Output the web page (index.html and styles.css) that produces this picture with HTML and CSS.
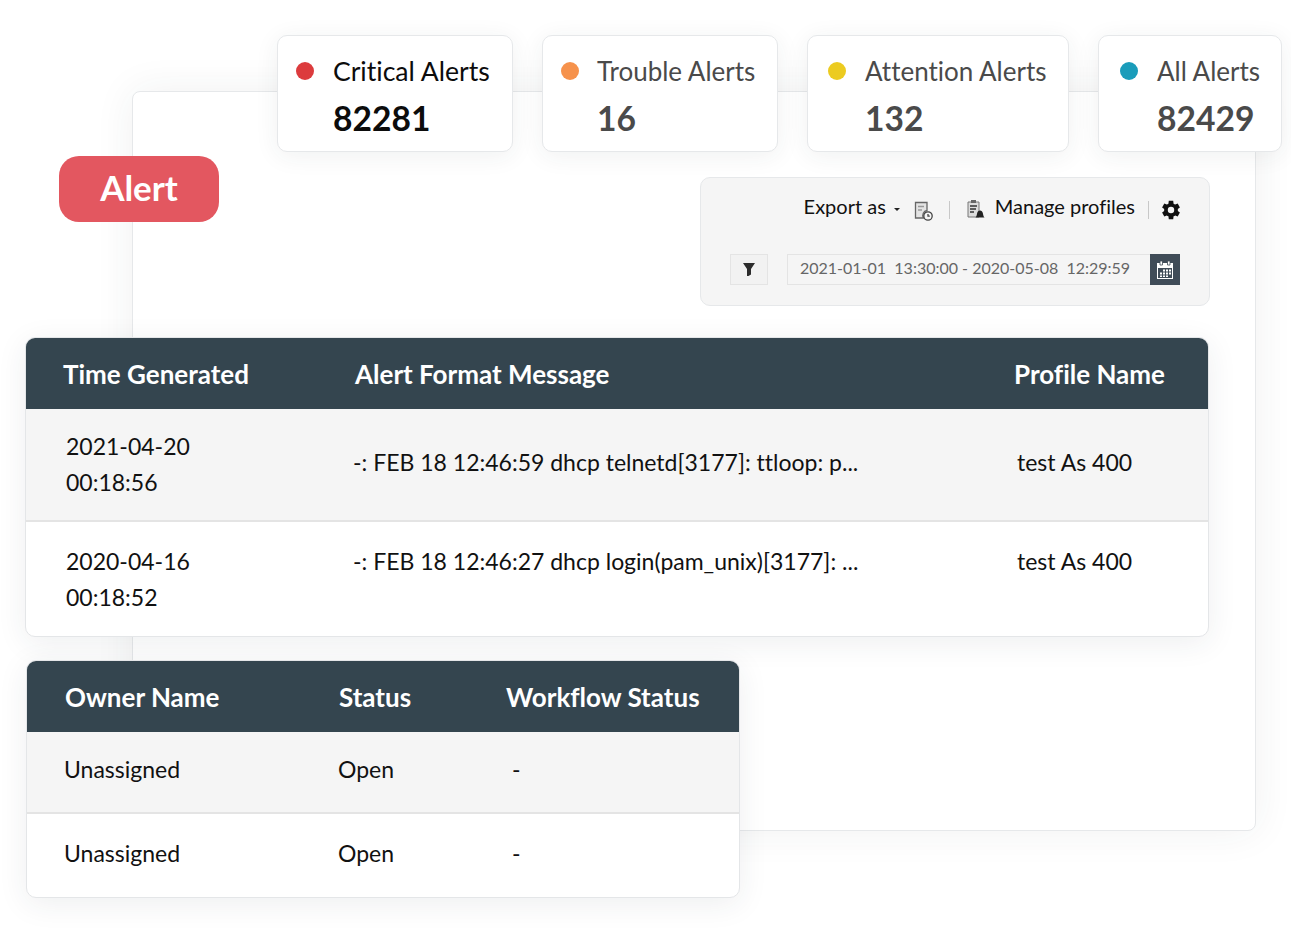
FILE: index.html
```html
<!DOCTYPE html>
<html lang="en">
<head>
    <meta charset="UTF-8">
    <title>Alert</title>
    <link rel="stylesheet" href="styles.css">
</head>
<body>

<div class="stage">
    <div class="backdrop"></div>

    <div class="stats">
        <div class="stat stat-critical">
            <span class="dot dot-red"></span>
            <div>
                <div class="stat-label">Critical Alerts</div>
                <div class="stat-value">82281</div>
            </div>
        </div>
        <div class="stat stat-trouble">
            <span class="dot dot-orange"></span>
            <div>
                <div class="stat-label">Trouble Alerts</div>
                <div class="stat-value">16</div>
            </div>
        </div>
        <div class="stat stat-attention">
            <span class="dot dot-yellow"></span>
            <div>
                <div class="stat-label">Attention Alerts</div>
                <div class="stat-value">132</div>
            </div>
        </div>
        <div class="stat stat-all">
            <span class="dot dot-blue"></span>
            <div>
                <div class="stat-label">All Alerts</div>
                <div class="stat-value">82429</div>
            </div>
        </div>
    </div>

    <div class="top-row">
        <div class="alert-badge">Alert</div>
        <div class="toolbar">
            <div class="toolbar-actions">
                <span class="toolbar-text">Export as</span>
                <span class="caret"></span>
                <svg class="icon icon-export" width="19" height="20" viewBox="0 0 19 20" fill="none" stroke="#444" stroke-width="1.300">
                    <path d="M1.500 1.500H13V9.500A5 5 0 0 0 9.500 17H1.500z" fill="#e4e4e4" stroke="#666"/>
                    <path d="M4 5.500h6M4 9h4" stroke="#999"/>
                    <circle cx="14" cy="15" r="4.200" fill="#f5f5f5"/>
                    <path d="M14 13v2.200h1.800"/>
                </svg>
                <span class="sep"></span>
                <svg class="icon icon-profiles" width="18" height="20" viewBox="0 0 18 20">
                    <path d="M1 3h11v15H1z" fill="#dcdcdc" stroke="#777"/>
                    <path d="M4 1h5v3H4z" fill="#666"/>
                    <path d="M3 7h7M3 10h6M3 13h4" stroke="#333" stroke-width="1.300"/>
                    <path d="M8.500 18.500c1-1 1.200-2.500 1.700-4.500.4-1.500 1.200-2.500 2.800-2.500s2.400 1 2.800 2.500c.5 2 .7 3.500 1.700 4.500z" fill="#222"/>
                </svg>
                <span class="toolbar-text manage">Manage profiles</span>
                <span class="sep sep-last"></span>
                <svg class="icon icon-gear" width="22" height="22" viewBox="0 0 24 24" fill="#111">
                    <path d="M19.400 13c.1-.3.100-.7.100-1s0-.7-.1-1l2.300-1.800-2.400-4.200-2.700 1.100c-.5-.4-1.100-.8-1.800-1L14.400 2H9.600l-.4 3.100c-.7.200-1.300.6-1.800 1L4.700 5 2.300 9.200 4.600 11c-.1.300-.1.700-.1 1s0 .7.100 1l-2.300 1.800L4.700 19l2.700-1.100c.5.400 1.100.8 1.800 1l.4 3.100h4.800l.4-3.100c.7-.2 1.300-.6 1.800-1l2.700 1.100 2.400-4.200zM12 15.500a3.500 3.500 0 1 1 0-7 3.500 3.500 0 0 1 0 7z"/>
                </svg>
            </div>
            <div class="toolbar-filters">
                <div class="filter-btn">
                    <svg width="12" height="13" viewBox="0 0 12 13" fill="#2c2c2c"><path d="M0 0h12L8 6v5.500L5.500 13H4V6z"/></svg>
                </div>
                <div class="date-range">2021-01-01&nbsp; 13:30:00 - 2020-05-08&nbsp; 12:29:59</div>
                <div class="date-btn">
                    <svg width="18" height="20" viewBox="0 0 18 20" fill="#fff">
                        <path d="M1 3h16v16H1zM2 8v10h14V8z" fill-rule="evenodd"/>
                        <path d="M4 1h2.500v4H4zM11.500 1H14v4h-2.500z" stroke="#404c58" stroke-width=".8"/>
                        <path d="M7 9.500h2v2H7zM10 9.500h2v2h-2zM13 9.500h2v2h-2zM4 12.500h2v2H4zM7 12.500h2v2H7zM10 12.500h2v2h-2zM13 12.500h2v2h-2zM4 15.500h2v1.500H4zM7 15.500h2v1.500H7zM10 15.500h2v1.500h-2z"/>
                    </svg>
                </div>
            </div>
        </div>
    </div>

    <div class="card card-main">
        <div class="main-row main-head">
            <div>Time Generated</div>
            <div>Alert Format Message</div>
            <div>Profile Name</div>
        </div>
        <div class="main-row main-body row-grey">
            <div>2021-04-20<br>00:18:56</div>
            <div class="cell-up">-: FEB 18 12:46:59 dhcp telnetd[3177]: ttloop: p...</div>
            <div class="cell-up">test As 400</div>
        </div>
        <div class="main-row main-body row-last">
            <div>2020-04-16<br>00:18:52</div>
            <div>-: FEB 18 12:46:27 dhcp login(pam_unix)[3177]: ...</div>
            <div>test As 400</div>
        </div>
    </div>

    <div class="card card-owner">
        <div class="owner-row owner-head">
            <div>Owner Name</div>
            <div>Status</div>
            <div>Workflow Status</div>
        </div>
        <div class="owner-row owner-body row-grey">
            <div>Unassigned</div>
            <div>Open</div>
            <div>-</div>
        </div>
        <div class="owner-row owner-body owner-last">
            <div>Unassigned</div>
            <div>Open</div>
            <div>-</div>
        </div>
    </div>
</div>

</body>
</html>
```

FILE: styles.css
```css
body {
    margin: 0;
    background-color: #ffffff;
    font-family: 'Lato', 'Liberation Sans', sans-serif;
    font-variant-ligatures: none;
    color: #111111;
}
.stage {
    position: relative;
    width: 1291px;
    height: 933px;
    padding-top: 35px;
    box-sizing: border-box;
    overflow: hidden;
}
.backdrop {
    position: absolute;
    left: 132px;
    top: 91px;
    width: 1124px;
    height: 740px;
    box-sizing: border-box;
    background-color: #ffffff;
    border: 1px solid #e6e8ea;
    border-radius: 8px;
    box-shadow: 0 0 40px rgba(40, 50, 60, 0.07);
}
.stats {
    position: relative;
    display: flex;
    gap: 29px;
    margin-left: 277px;
}
.stat {
    display: flex;
    height: 117px;
    box-sizing: border-box;
    padding: 19px 0 0 18px;
    background-color: #ffffff;
    border: 1px solid #e6e8ea;
    border-radius: 10px;
    box-shadow: 0 4px 24px rgba(40, 50, 60, 0.07);
    color: #4a4a4a;
}
.stat-critical { width: 236px; color: #0c0c0c; }
.stat-trouble { width: 236px; }
.stat-attention { width: 262px; padding-left: 20px; }
.stat-all { width: 184px; padding-left: 21px; }
.dot {
    flex: none;
    width: 18px;
    height: 18px;
    margin: 7px 19px 0 0;
    border-radius: 50%;
}
.stat-trouble .dot { margin-right: 18px; }
.dot-red { background-color: #dc3b3d; }
.dot-orange { background-color: #f6924c; }
.dot-yellow { background-color: #eccb20; }
.dot-blue { background-color: #1a9cba; }
.stat-label {
    font-size: 26px;
    line-height: 32px;
    white-space: nowrap;
}
.stat-critical .stat-label { font-size: 26.600px; }
.stat-value {
    margin-top: 11px;
    font-size: 33.600px;
    line-height: 40px;
    font-weight: 700;
}
.top-row {
    position: relative;
    display: flex;
    justify-content: space-between;
    align-items: flex-start;
    width: 1151px;
    margin: 4px 0 0 59px;
}
.alert-badge {
    width: 160px;
    height: 66px;
    background-color: #e35760;
    border-radius: 20px;
    color: #ffffff;
    font-size: 35px;
    font-weight: 700;
    line-height: 62px;
    text-align: center;
}
.toolbar {
    width: 510px;
    height: 129px;
    margin-top: 21px;
    box-sizing: border-box;
    padding: 17px 29px 0;
    background-color: #f5f5f5;
    border: 1px solid #e6e8ea;
    border-radius: 10px;
}
.toolbar-actions {
    display: flex;
    justify-content: flex-end;
    align-items: center;
    height: 28px;
    font-size: 20px;
}
.toolbar-text { margin-top: -6px; }
.caret {
    width: 0;
    height: 0;
    margin: 0 0 0 8px;
    border-left: 3px solid transparent;
    border-right: 3px solid transparent;
    border-top: 3px solid #222222;
}
.icon { flex: none; }
.icon-export { margin: 4px 0 0 14px; }
.icon-gear { margin: 2px -2px 0 -1px; }
.sep {
    width: 1px;
    height: 18px;
    margin: 2px 17px 0 16px;
    background-color: #c8c8c8;
}
.sep-last { margin: 2px 12px 0 13px; }
.manage { margin-left: 10px; }
.toolbar-filters {
    display: flex;
    align-items: center;
    margin-top: 31px;
}
.filter-btn {
    display: flex;
    align-items: center;
    justify-content: center;
    width: 38px;
    height: 31px;
    box-sizing: border-box;
    border: 1px solid #e4e4e4;
    background-color: #f2f2f2;
}
.date-range {
    flex: 1;
    height: 31px;
    margin-left: 19px;
    box-sizing: border-box;
    padding-left: 12px;
    border: 1px solid #e4e4e4;
    border-right: 0;
    color: #666666;
    font-size: 16px;
    line-height: 25px;
    white-space: nowrap;
}
.date-btn {
    display: flex;
    align-items: center;
    justify-content: center;
    width: 30px;
    height: 31px;
    background-color: #404c58;
}
.card {
    position: relative;
    box-sizing: border-box;
    background-color: #ffffff;
    border: 1px solid #e4e6e8;
    border-radius: 10px;
    box-shadow: 0 6px 30px rgba(40, 50, 60, 0.08);
    overflow: hidden;
}
.card-main {
    width: 1184px;
    height: 300px;
    margin: 31px 0 0 25px;
}
.card-owner {
    width: 714px;
    height: 238px;
    margin: 23px 0 0 26px;
}
.main-row,
.owner-row {
    display: grid;
    align-items: center;
    font-size: 23px;
}
.main-row { grid-template-columns: 329px 660px 1fr; }
.owner-row { grid-template-columns: 312px 167px 1fr; }
.main-head,
.owner-head {
    height: 71px;
    background-color: #34454f;
    color: #ffffff;
    font-size: 26px;
    font-weight: 700;
}
.main-head > div:nth-child(1) { padding-left: 37px; }
.main-head > div:nth-child(3) { margin-left: -1px; }
.main-body {
    box-sizing: border-box;
    height: 113px;
    padding-bottom: 2px;
    line-height: 36px;
}
.main-body > div:nth-child(1) { padding-left: 40px; }
.main-body > div:nth-child(2) { margin-left: -2px; }
.main-body > div:nth-child(3) { margin-left: 2px; }
.cell-up { padding-bottom: 4px; }
.row-last { align-items: start; padding: 21px 0 0; height: 114px; }
.row-grey { background-color: #f5f5f5; border-bottom: 2px solid #e4e4e4; }
.owner-head > div:nth-child(1) { padding-left: 38px; }
.owner-body { box-sizing: border-box; height: 82px; padding-bottom: 6px; }
.owner-last { height: 83px; padding-bottom: 6px; }
.owner-body > div:nth-child(1) { padding-left: 37px; }
.owner-body > div:nth-child(2) { margin-left: -1px; }
.owner-body > div:nth-child(3) { margin-left: 6px; }
```
